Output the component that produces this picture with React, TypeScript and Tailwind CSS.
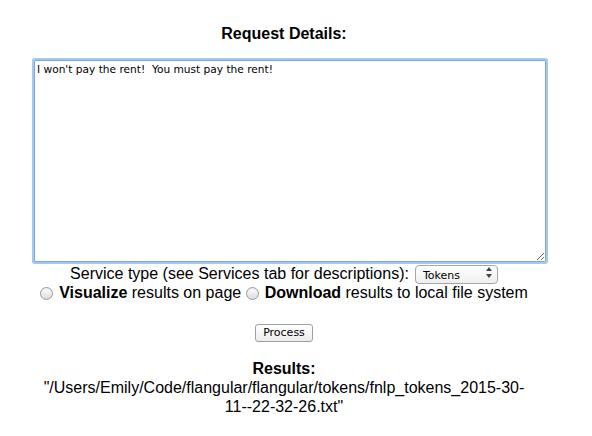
import { useState } from 'react';

function Radio({ checked, onClick }: { checked: boolean; onClick: () => void }) {
  return (
    <span
      onClick={onClick}
      className="inline-block w-[13px] h-[13px] rounded-full border border-[#9a9a9a] bg-gradient-to-b from-[#ffffff] to-[#dcdcdc] shadow-[inset_0_1px_1px_rgba(0,0,0,0.08)] align-[-2px] mr-[6px] cursor-pointer"
    >
      {checked && <span className="block w-[5px] h-[5px] rounded-full bg-[#333] mx-auto mt-[3px]" />}
    </span>
  );
}

export default function App() {
  const [text, setText] = useState("I won't pay the rent!  You must pay the rent!");
  const [mode, setMode] = useState<'none' | 'viz' | 'dl'>('none');

  return (
    <div className="w-[592px] h-[436px] bg-white text-black font-['Liberation_Sans',Arial,sans-serif]">
      <div className="w-[568px] text-center pt-[25px]">
        <h4 className="text-[16px] font-bold leading-[18px]">Request Details:</h4>

        {/* Textarea with focus glow */}
        <textarea
          value={text}
          onChange={e => setText(e.target.value)}
          className="block ml-[34px] mt-[17px] w-[512px] h-[202px] border border-[#7aa7e0] rounded-[1px] shadow-[0_0_0_2px_#a9c8ef] outline-none resize-y px-[2px] py-[2px] text-[10.6px] leading-[13px] font-['DejaVu_Sans',sans-serif] text-left"
        />

        <div className="mt-[2px] text-[16px] leading-[19px] flex items-center justify-center gap-[6px]">
          <span>Service type (see Services tab for descriptions):</span>
          <div className="relative w-[83px] h-[19px]">
            <select className="appearance-none w-full h-full border border-[#a6a6a6] rounded-[4px] bg-gradient-to-b from-[#ffffff] to-[#efefef] text-[11px] pl-[7px] text-left outline-none font-['DejaVu_Sans',sans-serif]">
              <option>Tokens</option>
              <option>Sentences</option>
              <option>Parse</option>
            </select>
            <span className="absolute right-[6px] top-[3px] flex flex-col items-center text-[#444] pointer-events-none">
              <svg width="6" height="5" viewBox="0 0 6 5"><path d="M3 0L6 4H0Z" fill="currentColor" /></svg>
              <svg width="6" height="5" viewBox="0 0 6 5" className="mt-[1px]"><path d="M0 1H6L3 5Z" fill="currentColor" /></svg>
            </span>
          </div>
        </div>

        <div className="text-[16px] leading-[19px]">
          <Radio checked={mode === 'viz'} onClick={() => setMode('viz')} />
          <b>Visualize</b> results on page{' '}
          <Radio checked={mode === 'dl'} onClick={() => setMode('dl')} />
          <b>Download</b> results to local file system
        </div>

        <button className="mt-[22px] h-[18px] px-[7px] border border-[#a0a0a0] rounded-[3px] bg-gradient-to-b from-[#ffffff] to-[#ececec] text-[11px] leading-[16px] font-['DejaVu_Sans',sans-serif]">
          Process
        </button>

        <div className="mt-[17px] text-[16px] font-bold leading-[18px]">Results:</div>
        <div className="text-[16px] leading-[19px] px-[40px]">
          "/Users/Emily/Code/flangular/flangular/tokens/fnlp_tokens_2015-30-11--22-32-26.txt"
        </div>
      </div>
    </div>
  );
}
